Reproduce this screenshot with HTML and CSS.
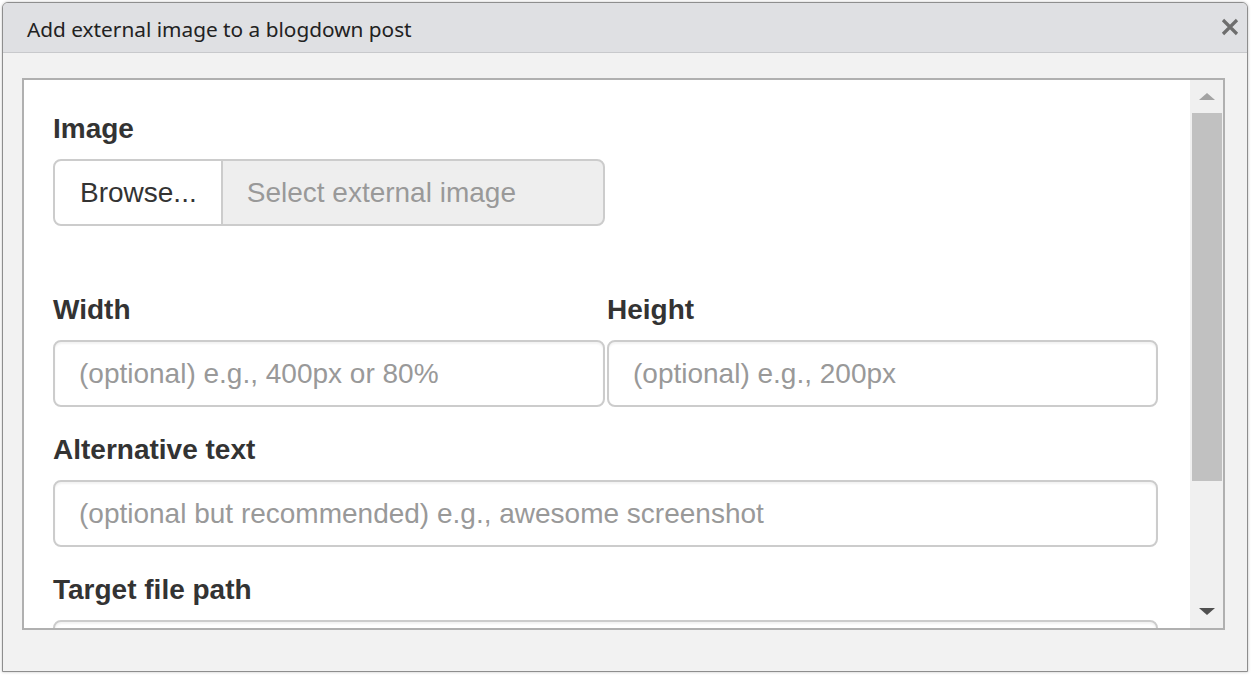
FILE: index.html
```html
<!DOCTYPE html>
<html>
<head>
<meta charset="utf-8">
<title>Add external image to a blogdown post</title>
<link rel="stylesheet" href="styles.css">
</head>
<body>
<div class="dialog">
  <div class="titlebar">
    <span class="title">Add external image to a blogdown post</span>
    <svg class="close" width="18" height="18" viewBox="0 0 18 18" aria-label="Close">
      <path d="M2 2 L16 16 M16 2 L2 16" stroke="#6e6e6e" stroke-width="3.2" stroke-linecap="butt" fill="none"/>
    </svg>
  </div>
  <div class="dialog-body">
    <div class="frame">
      <div class="content">
        <div class="group group-image">
          <label class="label">Image</label>
          <div class="input-group">
            <span class="btn-browse">Browse...</span>
            <span class="file-name">Select external image</span>
          </div>
        </div>
        <div class="split">
          <div class="group">
            <label class="label">Width</label>
            <div class="input"><span class="placeholder">(optional) e.g., 400px or 80%</span></div>
          </div>
          <div class="group">
            <label class="label">Height</label>
            <div class="input"><span class="placeholder">(optional) e.g., 200px</span></div>
          </div>
        </div>
        <div class="group">
          <label class="label">Alternative text</label>
          <div class="input"><span class="placeholder">(optional but recommended) e.g., awesome screenshot</span></div>
        </div>
        <div class="group">
          <label class="label">Target file path</label>
          <div class="input"><span class="placeholder"></span></div>
        </div>
      </div>
      <div class="scrollbar">
        <div class="sb-btn"><span class="arrow-up"></span></div>
        <div class="sb-track"><div class="sb-thumb"></div></div>
        <div class="sb-btn sb-btn-down"><span class="arrow-down"></span></div>
      </div>
    </div>
  </div>
</div>
</body>
</html>
```
FILE: styles.css
```css
* { box-sizing: border-box; }
html, body { margin: 0; padding: 0; }
body {
  background: #ffffff;
  width: 1251px;
  height: 675px;
  overflow: hidden;
  padding: 2px 0 0 2px;
}
.dialog {
  width: 1246px;
  height: 670px;
  border: 1px solid #8e8e8e;
  border-radius: 6px 6px 0 0;
  background: #f2f2f2;
  box-shadow: 0 0 3px rgba(0,0,0,0.25);
  display: flex;
  flex-direction: column;
  overflow: hidden;
}
.titlebar {
  height: 50px;
  flex: none;
  background: #dfe0e3;
  border-bottom: 1px solid #c8c9cc;
  display: flex;
  align-items: center;
  justify-content: space-between;
  padding: 0 8px 0 24px;
}
.title {
  font-family: "Noto Sans", "Open Sans", sans-serif;
  font-size: 20.8px;
  color: #222;
  padding-top: 3px;
}
.close { display: block; margin-bottom: 1px; }
.dialog-body {
  flex: 1;
  padding: 25px 22px 41px 19px;
}
.frame {
  height: 552px;
  border: 2px solid #b0b0b0;
  background: #fff;
  display: flex;
  overflow: hidden;
}
.content {
  flex: 1;
  overflow: hidden;
  padding: 27px 32px 0 29px;
  font-family: "Liberation Sans", Arial, sans-serif;
  font-size: 28px;
  color: #333;
}
.group { margin-bottom: 21px; }
.group-image { margin-bottom: 62px; }
.label {
  display: block;
  font-weight: bold;
  line-height: 40px;
  padding-top: 2px;
  margin-bottom: 10px;
  color: #333;
}
.input-group {
  display: flex;
  width: 552px;
  height: 67px;
}
.btn-browse {
  flex: none;
  display: flex;
  align-items: center;
  padding: 0 24px 0 25px;
  background: #fff;
  border: 2px solid #ccc;
  border-radius: 8px 0 0 8px;
  color: #333;
}
.file-name {
  flex: 1;
  display: flex;
  align-items: center;
  padding-left: 24px;
  margin-left: -2px;
  background: #eee;
  border: 2px solid #ccc;
  border-radius: 0 8px 8px 0;
  color: #999;
}
.split {
  display: grid;
  grid-template-columns: 552px 551px;
  column-gap: 2px;
}
.input {
  height: 67px;
  border: 2px solid #ccc;
  border-radius: 8px;
  background: #fff;
  box-shadow: inset 0 2px 2px rgba(0,0,0,0.05);
  display: flex;
  align-items: center;
  padding-left: 24px;
}
.placeholder { color: #999; white-space: nowrap; }
.scrollbar {
  width: 33px;
  flex: none;
  background: #f0f0f0;
  display: flex;
  flex-direction: column;
}
.sb-btn {
  height: 33px;
  flex: none;
  display: flex;
  align-items: center;
  justify-content: center;
  padding-left: 1px;
}
.sb-btn-down { height: 34px; }
.sb-track {
  flex: 1;
  padding: 0 1px 0 2px;
}
.sb-thumb {
  height: 368px;
  background: #c1c1c1;
}
.arrow-up {
  width: 0; height: 0;
  border-left: 8px solid transparent;
  border-right: 8px solid transparent;
  border-bottom: 7px solid #a3a3a3;
}
.arrow-down {
  width: 0; height: 0;
  border-left: 8px solid transparent;
  border-right: 8px solid transparent;
  border-top: 7px solid #505050;
}
```
